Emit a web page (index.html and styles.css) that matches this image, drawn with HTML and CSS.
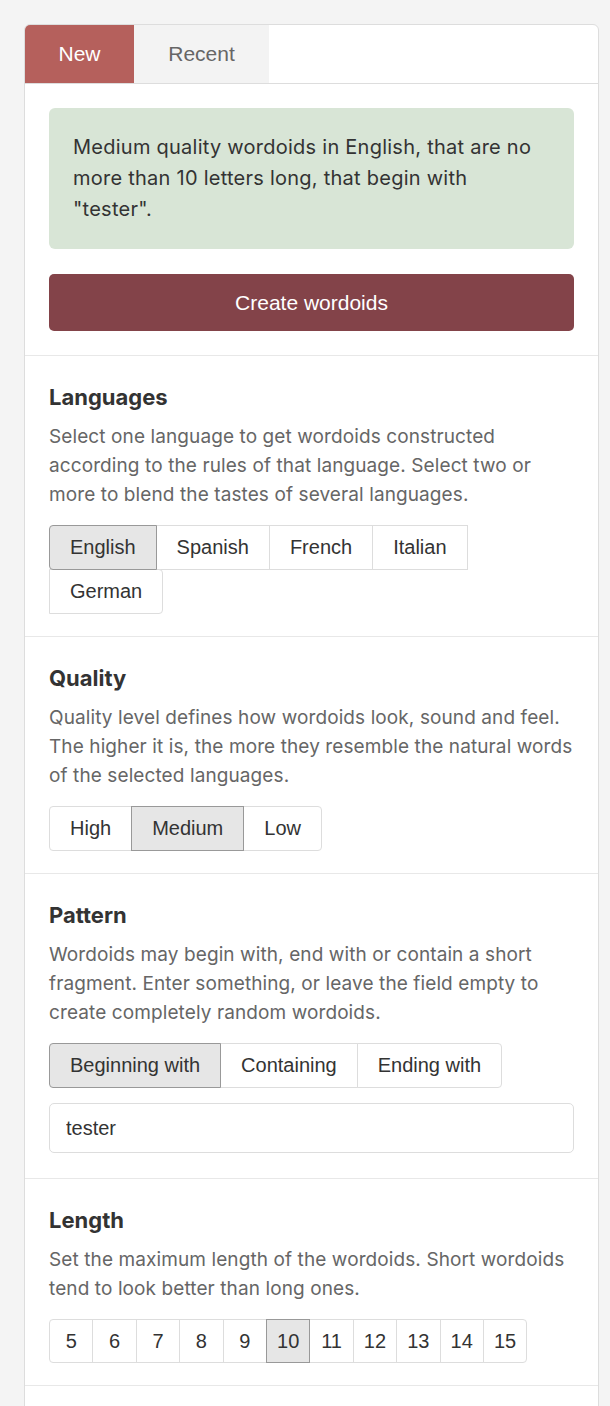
FILE: index.html
```html
<!DOCTYPE html>
<html lang="en">
<head>
    <meta charset="UTF-8">
    <meta name="viewport" content="width=device-width, initial-scale=1.0">
    <title>Wordoids</title>
    <link rel="stylesheet" href="styles.css">
</head>
<body>
    <div class="card">
        <div class="tabs">
            <div class="tab active">New</div>
            <div class="tab">Recent</div>
        </div>

        <div class="section top">
            <div class="summary">
                Medium quality wordoids in English, that are no more than 10 letters long, that begin with "tester".
            </div>
            <button class="create">Create wordoids</button>
        </div>

        <div class="section">
            <h2>Languages</h2>
            <p>Select one language to get wordoids constructed according to the rules of that language. Select two or more to blend the tastes of several languages.</p>
            <div class="group">
                <button class="opt selected">English</button>
                <button class="opt">Spanish</button>
                <button class="opt">French</button>
                <button class="opt">Italian</button>
                <button class="opt">German</button>
            </div>
        </div>

        <div class="section">
            <h2>Quality</h2>
            <p>Quality level defines how wordoids look, sound and feel. The higher it is, the more they resemble the natural words of the selected languages.</p>
            <div class="group">
                <button class="opt">High</button>
                <button class="opt selected">Medium</button>
                <button class="opt">Low</button>
            </div>
        </div>

        <div class="section">
            <h2>Pattern</h2>
            <p>Wordoids may begin with, end with or contain a short fragment. Enter something, or leave the field empty to create completely random wordoids.</p>
            <div class="group">
                <button class="opt selected">Beginning with</button>
                <button class="opt">Containing</button>
                <button class="opt">Ending with</button>
            </div>
            <input class="pattern" type="text" value="tester">
        </div>

        <div class="section">
            <h2>Length</h2>
            <p>Set the maximum length of the wordoids. Short wordoids tend to look better than long ones.</p>
            <div class="group numbers">
                <button class="opt">5</button>
                <button class="opt">6</button>
                <button class="opt">7</button>
                <button class="opt">8</button>
                <button class="opt">9</button>
                <button class="opt selected">10</button>
                <button class="opt">11</button>
                <button class="opt">12</button>
                <button class="opt">13</button>
                <button class="opt">14</button>
                <button class="opt">15</button>
            </div>
        </div>
        <div class="section last"></div>
    </div>
</body>
</html>
```

FILE: styles.css
```css
body {
    margin: 0;
    padding: 24px 11px 0 24px;
    background-color: #f4f4f4;
    font-family: Inter, "Liberation Sans", sans-serif;
    color: #333;
    height: 1406px;
    box-sizing: border-box;
    overflow: hidden;
}
.card {
    background-color: #fff;
    border: 1px solid #ddd;
    border-radius: 6px 6px 0 0;
    overflow: hidden;
}
.tabs {
    display: flex;
    height: 58px;
    border-bottom: 1px solid #ddd;
}
.tab {
    display: flex;
    align-items: center;
    justify-content: center;
    font-family: "Liberation Sans", Arial, sans-serif;
    font-size: 21px;
    color: #666;
    background-color: #f3f3f3;
    width: 135px;
}
.tab.active {
    width: 109px;
    background-color: #b5605c;
    color: #fff;
}
.section {
    padding: 27px 24px 22px;
    border-bottom: 1px solid #e8e8e8;
}
.section.top {
    padding: 24px 24px 24px;
}
.section.last {
    height: 120px;
    border-bottom: none;
}
.summary {
    background-color: #d8e5d6;
    border-radius: 6px;
    padding: 24px;
    font-size: 20px;
    line-height: 31px;
    letter-spacing: 0.25px;
    color: #333;
}
.create {
    display: block;
    width: 100%;
    height: 57px;
    margin-top: 25px;
    background-color: #834349;
    color: #fff;
    border: none;
    border-radius: 5px;
    font-family: "Liberation Sans", Arial, sans-serif;
    font-size: 21px;
}
h2 {
    margin: 0 0 11px;
    font-size: 22px;
    line-height: 28px;
    font-weight: 700;
    color: #333;
}
p {
    margin: 0 0 16px;
    font-size: 19px;
    line-height: 29px;
    letter-spacing: 0.1px;
    color: #666;
}
.group {
    display: flex;
    flex-wrap: wrap;
    padding-top: 1px;
    padding-left: 1px;
}
.opt {
    height: 45px;
    margin: -1px 0 0 -1px;
    padding: 0 20px;
    background-color: #fff;
    border: 1px solid #ddd;
    border-radius: 0;
    font-family: "Liberation Sans", Arial, sans-serif;
    font-size: 20px;
    color: #333;
}
.opt:first-child {
    border-radius: 4px 0 0 4px;
}
.opt:last-child {
    border-radius: 0 4px 4px 0;
}
.opt.selected {
    background-color: #e6e6e6;
    border-color: #999;
    position: relative;
    z-index: 1;
}
.numbers .opt {
    width: 44.4px;
    height: 44px;
    padding: 0;
}
.pattern {
    display: block;
    width: 100%;
    height: 50px;
    margin: 15px 0 3px;
    box-sizing: border-box;
    padding: 0 16px;
    border: 1px solid #ddd;
    border-radius: 5px;
    font-family: "Liberation Sans", Arial, sans-serif;
    font-size: 20px;
    color: #333;
}
```
